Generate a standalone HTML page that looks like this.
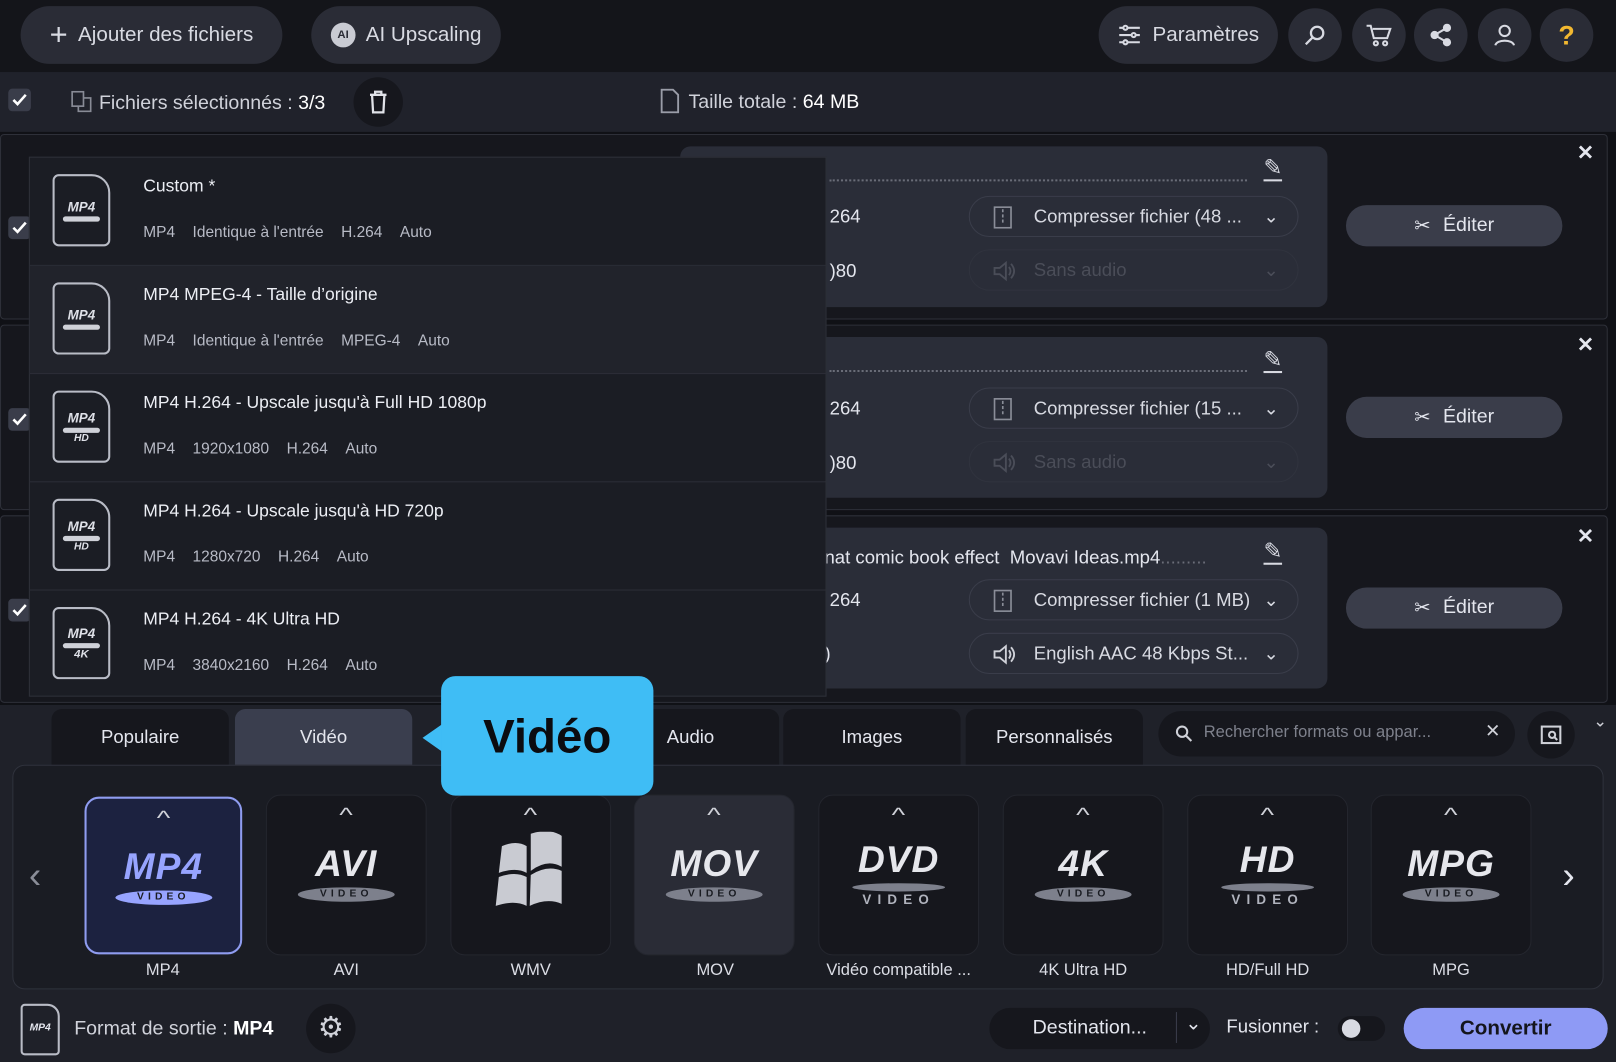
<!DOCTYPE html>
<html><head><meta charset="utf-8"><style>
*{box-sizing:border-box;margin:0;padding:0}
html,body{width:1616px;height:1062px;overflow:hidden;background:#1f2129}
#w{position:absolute;left:0;top:0;width:1568px;height:1030px;transform:scale(1.0306);transform-origin:0 0;font-family:"Liberation Sans",sans-serif;color:#e4e6ee;background:#1f2129}
.a{position:absolute}
.pill{position:absolute;background:#2a2c36;border-radius:28px;display:flex;align-items:center;justify-content:center;font-size:20px;color:#d8dae2}
.circ{position:absolute;width:52px;height:52px;border-radius:50%;background:#2a2c36;display:flex;align-items:center;justify-content:center}
.chk{position:absolute;width:22px;height:22px;border-radius:4px;background:#3a3d4a;display:flex;align-items:center;justify-content:center}
.row{position:absolute;left:0;width:1560px;background:#16171d;border:1px solid #2e3039;border-radius:4px}
.inner{position:absolute;left:660px;width:628px;height:156px;background:#2a2d38;border-radius:10px}
.sel{position:absolute;left:940px;width:320px;height:40px;border:1px solid #3a3d4a;border-radius:20px;font-size:18px;display:flex;align-items:center;padding-left:62px;color:#d8dae2}
.sel svg{position:absolute;left:22px;top:9px}
.ed{position:absolute;left:1306px;width:210px;height:40px;border-radius:20px;background:#3a3d4a;font-size:19px;display:flex;align-items:center;justify-content:center;gap:12px}
.dd{position:absolute;left:28px;top:152px;width:774px;height:524px;background:#1b1d24;border:1px solid #2e3039}
.it{position:absolute;left:0;width:772px;height:105px;border-bottom:1px solid #2c2e37}
.it .t{position:absolute;left:110px;top:18px;font-size:17px;color:#eceef4}
.it .s{position:absolute;left:110px;top:64px;font-size:15px;color:#b8bbc6}
.it .s span{margin-right:17px}
.fi{position:absolute;left:22px;top:16px;width:56px;height:70px;border:2px solid #b9bcc6;border-radius:6px 18px 6px 6px;display:flex;flex-direction:column;align-items:center;justify-content:center;font-style:italic;font-weight:bold;font-size:13px;color:#dfe1e8}
.fi i{display:block;width:36px;height:5px;background:#cfd1d8;border-radius:3px;margin-top:2px}
.tab{position:absolute;top:688px;height:54px;background:#16171d;border-radius:10px 10px 0 0;font-size:18px;display:flex;align-items:center;justify-content:center;color:#e4e6ee}
.card{position:absolute;top:771px;width:156px;height:156px;border-radius:14px;background:#16171d;border:1px solid #24262e;display:flex;flex-direction:column;align-items:center}
.card .up{margin-top:8px;font-size:20px;color:#cfd1d8;transform:scaleX(1.4)}
.card .lg{margin-top:14px;font-style:italic;font-weight:bold;font-size:36px;color:#e6e7ec;letter-spacing:1px}
.card .ov{width:94px;height:14px;border-radius:50%;background:#7d808c;color:#1a1c22;font-size:10px;font-weight:bold;letter-spacing:4px;text-align:center;line-height:14px;margin-top:2px}
.lab{position:absolute;top:933px;width:170px;text-align:center;font-size:16px;color:#dcdee6}
</style></head><body><div id="w">
<div class="a" style="left:0;top:0;width:1568px;height:70px;background:#14151a"></div>
<div class="pill" style="left:20px;top:6px;width:254px;height:56px"><span style="font-size:30px;margin-right:10px;font-weight:300">+</span>Ajouter des fichiers</div>
<div class="pill" style="left:302px;top:6px;width:184px;height:56px"><span style="display:inline-block;width:24px;height:24px;border-radius:50%;background:#c9cbd3;color:#2a2c36;font-size:11px;font-weight:bold;text-align:center;line-height:24px;margin-right:10px">AI</span>AI Upscaling</div>
<div class="pill" style="left:1066px;top:6px;width:174px;height:56px"><svg width="24" height="22" style="margin-right:10px" stroke="#d8dae2" stroke-width="2"><path d="M2 4h20M2 11h20M2 18h20"/><circle cx="8" cy="4" r="2" fill="#2a2c36"/><circle cx="16" cy="11" r="2" fill="#2a2c36"/><circle cx="8" cy="18" r="2" fill="#2a2c36"/></svg>Paramètres</div>
<div class="circ" style="left:1250px;top:8px"><svg width="24" height="24" fill="none" stroke="#d8dae2" stroke-width="2.2"><circle cx="14" cy="10" r="6"/><path d="M10 14l-7 7"/></svg></div>
<div class="circ" style="left:1312px;top:8px"><svg width="26" height="24" fill="none" stroke="#d8dae2" stroke-width="2"><path d="M1 3h4l3 12h13l3-9H7"/><circle cx="10" cy="20" r="2"/><circle cx="19" cy="20" r="2"/></svg></div>
<div class="circ" style="left:1372px;top:8px"><svg width="24" height="24" fill="#d8dae2" stroke="#d8dae2" stroke-width="2"><circle cx="18" cy="5" r="3"/><circle cx="6" cy="12" r="3"/><circle cx="18" cy="19" r="3"/><path d="M6 12L18 5M6 12l12 7"/></svg></div>
<div class="circ" style="left:1434px;top:8px"><svg width="24" height="24" fill="none" stroke="#d8dae2" stroke-width="2"><circle cx="12" cy="8" r="5"/><path d="M3 22c1-6 17-6 18 0"/></svg></div>
<div class="circ" style="left:1494px;top:8px;color:#f2b830;font-size:26px;font-weight:bold">?</div>
<div class="a" style="left:0;top:70px;width:1568px;height:58px;background:#20222b"></div>
<div class="chk" style="left:8px;top:86px"><svg width="16" height="14"><path d="M2 7l4 4 8-9" stroke="#fff" stroke-width="2.5" fill="none"/></svg></div>
<div class="a" style="left:68px;top:88px;font-size:19px;color:#d0d2da"><svg width="22" height="22" style="vertical-align:-4px;margin-right:6px" fill="none" stroke="#888b96" stroke-width="1.6"><rect x="2" y="1" width="11" height="14"/><path d="M8 15v5h12V7h-7"/></svg>Fichiers sélectionnés : <span style="color:#fff">3/3</span></div>
<div class="a" style="left:343px;top:75px;width:48px;height:48px;border-radius:50%;background:#16171d;display:flex;align-items:center;justify-content:center"><svg width="20" height="24" fill="none" stroke="#e0e2e8" stroke-width="2.2"><path d="M2 5h16M7 5V2h6v3M4 5l1 17h10l1-17"/></svg></div>
<div class="a" style="left:640px;top:86px;font-size:19px;color:#d0d2da"><svg width="20" height="24" style="vertical-align:-5px;margin-right:8px" fill="none" stroke="#9a9da8" stroke-width="1.8"><path d="M2 1h11l5 5v17H2z"/></svg>Taille totale : <span style="color:#fff">64 MB</span></div>
<div class="a" style="left:0;top:128px;width:1568px;height:556px;background:#101116"></div>
<div class="row" style="top:130px;height:180px"></div>
<div class="row" style="top:315px;height:180px"></div>
<div class="row" style="top:500px;height:182px"></div>
<div class="chk" style="left:8px;top:210px"><svg width="16" height="14"><path d="M2 7l4 4 8-9" stroke="#fff" stroke-width="2.5" fill="none"/></svg></div>
<div class="chk" style="left:8px;top:396px"><svg width="16" height="14"><path d="M2 7l4 4 8-9" stroke="#fff" stroke-width="2.5" fill="none"/></svg></div>
<div class="chk" style="left:8px;top:581px"><svg width="16" height="14"><path d="M2 7l4 4 8-9" stroke="#fff" stroke-width="2.5" fill="none"/></svg></div>
<div class="inner" style="top:142px"></div>
<div class="inner" style="top:327px"></div>
<div class="inner" style="top:512px"></div>
<div class="a" style="left:805px;top:174px;width:405px;border-top:2px dotted #6a6d78"></div>
<div class="a" style="left:805px;top:359px;width:405px;border-top:2px dotted #6a6d78"></div>
<div class="a" style="left:800px;top:531px;font-size:18px;color:#e4e6ee">nat comic book effect&nbsp; Movavi Ideas.mp4<span style="color:#6a6d78">.........</span></div>
<div class="a" style="left:1226px;top:152px;font-size:22px;color:#d8dae2;border-bottom:2px solid #d8dae2;line-height:22px">✎</div>
<div class="a" style="left:1226px;top:338px;font-size:22px;color:#d8dae2;border-bottom:2px solid #d8dae2;line-height:22px">✎</div>
<div class="a" style="left:1226px;top:524px;font-size:22px;color:#d8dae2;border-bottom:2px solid #d8dae2;line-height:22px">✎</div>
<div class="a" style="left:805px;top:200px;font-size:18px">264</div>
<div class="a" style="left:805px;top:253px;font-size:18px">)80</div>
<div class="a" style="left:805px;top:386px;font-size:18px">264</div>
<div class="a" style="left:805px;top:439px;font-size:18px">)80</div>
<div class="a" style="left:805px;top:572px;font-size:18px">264</div>
<div class="a" style="left:800px;top:624px;font-size:18px">)</div>
<div class="sel" style="top:190px"><svg width="20" height="22" fill="none" stroke="#8a8d98" stroke-width="1.6"><rect x="2" y="1" width="16" height="20"/><path d="M10 3v3M10 8v3M10 13v3"/></svg>Compresser fichier (48 ... <span style="position:absolute;right:18px">⌄</span></div>
<div class="sel" style="top:242px;color:#4a4d58;border-color:#30333e"><svg width="22" height="22" fill="none" stroke="#4a4d58" stroke-width="1.8"><path d="M2 8h5l6-5v16l-6-5H2zM16 7q3 4 0 8M18 4q6 7 0 14"/></svg>Sans audio<span style="position:absolute;right:18px">⌄</span></div>
<div class="sel" style="top:376px"><svg width="20" height="22" fill="none" stroke="#8a8d98" stroke-width="1.6"><rect x="2" y="1" width="16" height="20"/><path d="M10 3v3M10 8v3M10 13v3"/></svg>Compresser fichier (15 ... <span style="position:absolute;right:18px">⌄</span></div>
<div class="sel" style="top:428px;color:#4a4d58;border-color:#30333e"><svg width="22" height="22" fill="none" stroke="#4a4d58" stroke-width="1.8"><path d="M2 8h5l6-5v16l-6-5H2zM16 7q3 4 0 8M18 4q6 7 0 14"/></svg>Sans audio<span style="position:absolute;right:18px">⌄</span></div>
<div class="sel" style="top:562px"><svg width="20" height="22" fill="none" stroke="#8a8d98" stroke-width="1.6"><rect x="2" y="1" width="16" height="20"/><path d="M10 3v3M10 8v3M10 13v3"/></svg>Compresser fichier (1 MB)<span style="position:absolute;right:18px">⌄</span></div>
<div class="sel" style="top:614px"><svg width="22" height="22" fill="none" stroke="#cfd1d8" stroke-width="1.8"><path d="M2 8h5l6-5v16l-6-5H2zM16 7q3 4 0 8M18 4q6 7 0 14"/></svg>English AAC 48 Kbps St...<span style="position:absolute;right:18px">⌄</span></div>
<div class="ed" style="top:199px"><span>✂</span>Éditer</div>
<div class="ed" style="top:385px"><span>✂</span>Éditer</div>
<div class="ed" style="top:570px"><span>✂</span>Éditer</div>
<div class="a" style="left:1530px;top:136px;font-size:20px;font-weight:bold">✕</div>
<div class="a" style="left:1530px;top:322px;font-size:20px;font-weight:bold">✕</div>
<div class="a" style="left:1530px;top:508px;font-size:20px;font-weight:bold">✕</div>
<div class="dd">
<div class="it" style="top:0"><div class="fi">MP4<i></i></div><div class="t">Custom *</div><div class="s"><span>MP4</span><span>Identique à l'entrée</span><span>H.264</span><span>Auto</span></div></div>
<div class="it" style="top:105px;background:#21232b"><div class="fi">MP4<i></i></div><div class="t">MP4 MPEG-4 - Taille d’origine</div><div class="s"><span>MP4</span><span>Identique à l'entrée</span><span>MPEG-4</span><span>Auto</span></div></div>
<div class="it" style="top:210px"><div class="fi">MP4<i></i><span style="font-size:10px">HD</span></div><div class="t">MP4 H.264 - Upscale jusqu'à Full HD 1080p</div><div class="s"><span>MP4</span><span>1920x1080</span><span>H.264</span><span>Auto</span></div></div>
<div class="it" style="top:315px"><div class="fi">MP4<i></i><span style="font-size:10px">HD</span></div><div class="t">MP4 H.264 - Upscale jusqu'à HD 720p</div><div class="s"><span>MP4</span><span>1280x720</span><span>H.264</span><span>Auto</span></div></div>
<div class="it" style="top:420px;border:none"><div class="fi">MP4<i></i><span style="font-size:11px">4K</span></div><div class="t">MP4 H.264 - 4K Ultra HD</div><div class="s"><span>MP4</span><span>3840x2160</span><span>H.264</span><span>Auto</span></div></div>
</div>
<div class="tab" style="left:50px;width:172px">Populaire</div>
<div class="tab" style="left:228px;width:172px;background:#3a3e4e">Vidéo</div>
<div class="tab" style="left:584px;width:172px">Audio</div>
<div class="tab" style="left:760px;width:172px">Images</div>
<div class="tab" style="left:937px;width:172px">Personnalisés</div>
<div class="a" style="left:1124px;top:690px;width:346px;height:44px;border-radius:22px;background:#16171d;font-size:16px;color:#7e818c;padding:12px 0 0 44px">Rechercher formats ou appar...<svg style="position:absolute;left:16px;top:13px" width="18" height="18" fill="none" stroke="#cfd1d8" stroke-width="2"><circle cx="7" cy="7" r="5"/><path d="M11 11l5 5"/></svg><span style="position:absolute;right:14px;top:9px;color:#cfd1d8;font-size:18px">✕</span></div>
<div class="a" style="left:1482px;top:690px;width:46px;height:46px;border-radius:50%;background:#16171d"><svg style="position:absolute;left:12px;top:12px" width="22" height="22" fill="none" stroke="#cfd1d8" stroke-width="2"><rect x="2" y="3" width="18" height="16"/><circle cx="12" cy="11" r="3"/><path d="M14 13l3 3"/></svg></div>
<div class="a" style="left:1546px;top:690px;color:#cfd1d8;font-size:16px">⌄</div>
<div class="a" style="left:12px;top:742px;width:1544px;height:218px;background:#1a1c23;border:1px solid #2f323c;border-radius:12px"></div>
<div class="a" style="left:28px;top:828px;font-size:36px;color:#8a8d98">‹</div>
<div class="a" style="left:1516px;top:828px;font-size:36px;color:#e4e6ee">›</div>
<div class="card" style="left:82px;top:773px;width:153px;height:153px;background:#1c2240;border:2px solid #8f9cf0"><div class="up">^</div><div class="lg" style="color:#97a4ff">MP4</div><div class="ov" style="background:#97a4ff">VIDEO</div></div>
<div class="card" style="left:258px"><div class="up">^</div><div class="lg">AVI</div><div class="ov">VIDEO</div></div>
<div class="card" style="left:437px"><div class="up">^</div><svg width="80" height="80" viewBox="0 0 80 80" style="margin-top:4px"><path d="M12 14q14-6 24 0v26q-10-6-27 0zM40 2q18-6 30 2v30q-14-8-30 4zM9 44q16-6 27 0v28q-12-6-30 0zM40 42q16-10 30-4v32q-14-6-31 2z" fill="#c9cbd2"/></svg></div>
<div class="card" style="left:615px;background:#2a2c36"><div class="up">^</div><div class="lg">MOV</div><div class="ov">VIDEO</div></div>
<div class="card" style="left:794px"><div class="up">^</div><div class="lg" style="margin-top:10px">DVD</div><div class="ov" style="height:8px;width:90px"></div><div style="font-size:13px;letter-spacing:6px;color:#b0b3bd;font-weight:bold">VIDEO</div></div>
<div class="card" style="left:973px"><div class="up">^</div><div class="lg">4K</div><div class="ov">VIDEO</div></div>
<div class="card" style="left:1152px"><div class="up">^</div><div class="lg" style="margin-top:10px">HD</div><div class="ov" style="height:8px;width:90px"></div><div style="font-size:13px;letter-spacing:6px;color:#b0b3bd;font-weight:bold">VIDEO</div></div>
<div class="card" style="left:1330px"><div class="up">^</div><div class="lg">MPG</div><div class="ov">VIDEO</div></div>
<div class="lab" style="left:73px">MP4</div>
<div class="lab" style="left:251px">AVI</div>
<div class="lab" style="left:430px">WMV</div>
<div class="lab" style="left:609px">MOV</div>
<div class="lab" style="left:787px">Vidéo compatible ...</div>
<div class="lab" style="left:966px">4K Ultra HD</div>
<div class="lab" style="left:1145px">HD/Full HD</div>
<div class="lab" style="left:1323px">MPG</div>
<div class="a" style="left:410px;top:702px;width:0;height:0;border-top:14px solid transparent;border-bottom:14px solid transparent;border-right:20px solid #3fbdf5"></div>
<div class="a" style="left:428px;top:656px;width:206px;height:116px;background:#3fbdf5;border-radius:14px;color:#0b0c10;font-size:46px;font-weight:bold;display:flex;align-items:center;justify-content:center">Vidéo</div>
<div class="a" style="left:20px;top:974px;width:38px;height:50px;border:2px solid #b9bcc6;border-radius:4px 12px 4px 4px;font-size:10px;font-style:italic;font-weight:bold;text-align:center;padding-top:16px">MP4</div>
<div class="a" style="left:72px;top:988px;font-size:19px;color:#d0d2da">Format de sortie : <b style="color:#fff">MP4</b></div>
<div class="a" style="left:297px;top:974px;width:48px;height:48px;border-radius:50%;background:#16171d;color:#d0d2da;font-size:28px;text-align:center;line-height:46px">⚙</div>
<div class="a" style="left:960px;top:978px;width:214px;height:40px;border-radius:20px;background:#16171d;font-size:19px;padding:9px 0 0 42px">Destination...<span style="position:absolute;right:8px;top:4px;padding-left:8px;border-left:1px solid #3a3d4a;height:30px">⌄</span></div>
<div class="a" style="left:1190px;top:986px;font-size:18px">Fusionner :</div>
<div class="a" style="left:1298px;top:986px;width:46px;height:24px;border-radius:12px;background:#16171d"><div style="position:absolute;left:4px;top:3px;width:18px;height:18px;border-radius:50%;background:#d8dae2"></div></div>
<div class="a" style="left:1362px;top:978px;width:198px;height:40px;border-radius:20px;background:#8e9af5;color:#14151c;font-size:20px;font-weight:bold;text-align:center;line-height:40px">Convertir</div>
</div></body></html>
